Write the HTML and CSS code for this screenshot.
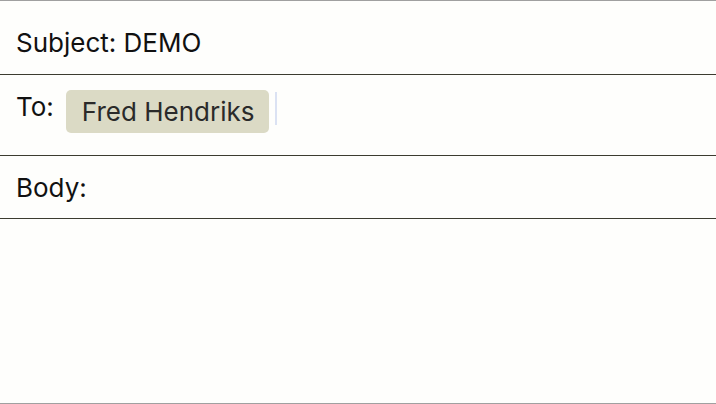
FILE: index.html
```html
<!DOCTYPE html>
<html>
<head>
<meta charset="utf-8">
<link rel="stylesheet" href="styles.css">
</head>
<body>
<div class="screen">
  <div class="row subject">Subject: DEMO</div>
  <div class="row to">
    <span class="label">To:</span>
    <span class="chip">Fred Hendriks</span>
    <span class="caret"></span>
  </div>
  <div class="row body-row">Body:</div>
  <div class="content"></div>
</div>
</body>
</html>
```
FILE: styles.css
```css
html, body {
  margin: 0;
  padding: 0;
  background: #fefefc;
}
.screen {
  width: 716px;
  height: 404px;
  box-sizing: border-box;
  border-top: 1px solid #a0a0a0;
  border-bottom: 1px solid #a0a0a0;
  display: flex;
  flex-direction: column;
  font-family: Inter, "Liberation Sans", sans-serif;
  color: #111;
  font-size: 26px;
}
.row {
  box-sizing: border-box;
  border-bottom: 1px solid #3c3c30;
  padding-left: 16px;
}
.subject {
  height: 74px;
  padding-top: 26px;
  line-height: 32px;
}
.to {
  height: 81px;
  display: flex;
  align-items: flex-start;
  padding-top: 15px;
}
.label {
  line-height: 32px;
  margin-top: 1px;
}
.chip {
  margin-left: 12px;
  height: 43px;
  width: 203px;
  box-sizing: border-box;
  padding-left: 16px;
  background: #dbdac5;
  border-radius: 5px;
  color: #2a2a2a;
  line-height: 43px;
}
.caret {
  width: 2px;
  height: 33px;
  margin-left: 6px;
  margin-top: 2px;
  background: #dbe2f3;
}
.body-row {
  height: 63px;
  padding-top: 16px;
  line-height: 32px;
}
.content {
  flex: 1;
}
```
